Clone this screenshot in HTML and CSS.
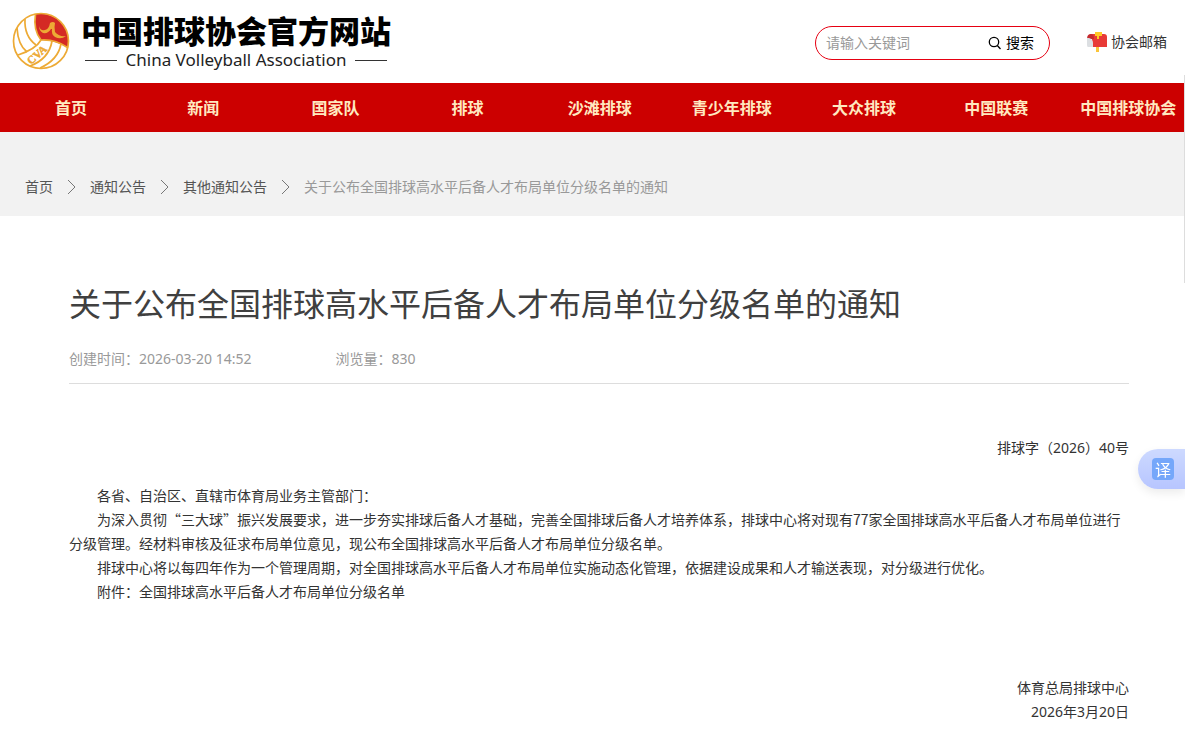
FILE: index.html
```html
<!DOCTYPE html>
<html lang="zh-CN">
<head>
  <meta charset="UTF-8" />
  <meta name="viewport" content="width=device-width, initial-scale=1.0"/>
  <title>关于公布全国排球高水平后备人才布局单位分级名单的通知</title>
  <link rel="stylesheet" href="styles.css">
</head>
<body>

  <header class="header">
    <a class="logo" href="#">
      <svg class="logo-ball" viewBox="0 0 58 58" width="58" height="58" aria-hidden="true">
        <circle cx="29" cy="29" r="27.5" fill="#fff"/>
        <path d="M23.500 2Q33 0 42 5Q56 13 56.500 30Q56 34 55.500 35.500Q43 28 29 28Q21 18 23.500 2Z" fill="#d42a24"/>
        <g fill="none" stroke="#edaa35" stroke-width="1.700">
          <circle cx="29" cy="29" r="27.500"/>
          <path d="M23.500 2Q21 18 29 28Q43 27 55.500 35.500"/>
          <path d="M13 7Q12 24 24 33"/>
          <path d="M5 16Q6 33 15 40"/>
          <path d="M29 28Q24 37 6 43"/>
          <path d="M40 29Q37 47 18 54"/>
          <path d="M49 32Q46 48 28 56"/>
        </g>
        <path d="M27 14Q28 19 33 18Q37 17 38 11Q41 9 43 11Q42 15 43 20Q47 25 54 24Q49 28 43 25Q39 22 40 17L39 17Q36 22 31 21Q27 19 27 14Z" fill="#edaa35"/>
        <text class="logo-mark" x="19" y="53" transform="rotate(-42 19 53)">CVA</text>
      </svg>
      <span class="logo-text">
        <span class="logo-name">中国排球协会官方网站</span>
        <span class="logo-en">China Volleyball Association</span>
      </span>
    </a>

    <form class="search" role="search">
      <input type="text" placeholder="请输入关键词" aria-label="请输入关键词" />
      <button type="button">
        <svg viewBox="0 0 14 14" width="14" height="14" fill="none" stroke="#000" stroke-width="1.300" aria-hidden="true">
          <circle cx="6" cy="6" r="4.700"/>
          <path d="M9.300 9.500L12.500 13"/>
        </svg>
        搜索
      </button>
    </form>

    <a class="mail" href="#">
      <svg viewBox="0 0 22 22" width="22" height="22" aria-hidden="true">
        <rect x="10" y="15" width="3" height="6" fill="#fbc53a"/>
        <path d="M4 3H18Q21 3 21 6V16H6V8Z" fill="#e83a37"/>
        <path d="M1 8Q1 3 5 3Q8 3 8 8Z" fill="#c52a2e"/>
        <path d="M1 7H3Q7 8 7 12V16H2Q1 16 1 14Z" fill="#dcdfe2"/>
        <path d="M9 1H16V5H13V8H11V5H9Z" fill="#ffc928"/>
      </svg>
      协会邮箱
    </a>
  </header>

  <nav class="nav">
    <a href="#">首页</a>
    <a href="#">新闻</a>
    <a href="#">国家队</a>
    <a href="#">排球</a>
    <a href="#">沙滩排球</a>
    <a href="#">青少年排球</a>
    <a href="#">大众排球</a>
    <a href="#">中国联赛</a>
    <a href="#">中国排球协会</a>
  </nav>

  <div class="crumbs">
    <a href="#">首页</a>
    <svg class="arrow" viewBox="0 0 9 14" width="9" height="14"><path d="M1 0L8 7L1 14"/></svg>
    <a href="#">通知公告</a>
    <svg class="arrow" viewBox="0 0 9 14" width="9" height="14"><path d="M1 0L8 7L1 14"/></svg>
    <a href="#">其他通知公告</a>
    <svg class="arrow" viewBox="0 0 9 14" width="9" height="14"><path d="M1 0L8 7L1 14"/></svg>
    <span>关于公布全国排球高水平后备人才布局单位分级名单的通知</span>
  </div>

  <main class="article">
    <h1>关于公布全国排球高水平后备人才布局单位分级名单的通知</h1>
    <div class="meta">
      <span>创建时间：2026-03-20 14:52</span>
      <span>浏览量：830</span>
    </div>

    <div class="content">
      <p class="right">排球字（2026）40号</p>
      <div class="text">
        <p>各省、自治区、直辖市体育局业务主管部门：</p>
        <p>为深入贯彻“三大球”振兴发展要求，进一步夯实排球后备人才基础，完善全国排球后备人才培养体系，排球中心将对现有77家全国排球高水平后备人才布局单位进行分级管理。经材料审核及征求布局单位意见，现公布全国排球高水平后备人才布局单位分级名单。</p>
        <p>排球中心将以每四年作为一个管理周期，对全国排球高水平后备人才布局单位实施动态化管理，依据建设成果和人才输送表现，对分级进行优化。</p>
        <p>附件：全国排球高水平后备人才布局单位分级名单</p>
      </div>
      <p class="right">体育总局排球中心</p>
      <p class="right">2026年3月20日</p>
    </div>
  </main>

  <!-- Floating widgets on the right edge -->
  <div class="side-panel"></div>
  <button class="translate" type="button"><span>译</span></button>

</body>
</html>
```
FILE: styles.css
```css
* {
  margin: 0;
  padding: 0;
  box-sizing: border-box;
}

body {
  background: #fff;
  color: #333;
  font-family: "Noto Sans", "Noto Sans CJK SC", sans-serif;
  font-size: 14px;
  line-height: 24px;
  overflow: hidden;
}

a {
  color: inherit;
  text-decoration: none;
}

/* Header */
.header {
  display: flex;
  align-items: center;
  height: 83px;
  padding: 0 18px 0 12px;
}

.logo {
  display: flex;
  align-items: center;
  gap: 11px;
  margin-right: auto;
  padding-bottom: 1px;
  color: #000;
}

.logo-mark {
  fill: #edaa35;
  font-family: "Liberation Serif", serif;
  font-size: 11px;
  font-weight: bold;
  stroke: #edaa35;
  stroke-width: 0.5px;
}

.logo-text {
  display: flex;
  flex-direction: column;
}

.logo-name {
  font-family: "Noto Sans CJK SC", sans-serif;
  font-size: 31px;
  font-weight: 900;
  line-height: 38px;
}

.logo-en {
  display: flex;
  align-items: center;
  justify-content: center;
  gap: 9px;
  color: #222;
  font-family: "Noto Sans", sans-serif;
  font-size: 17px;
  line-height: 22px;
  white-space: nowrap;
}

.logo-en::before,
.logo-en::after {
  content: "";
  width: 32px;
  height: 1px;
  background: #333;
}

/* Search */
.search {
  display: flex;
  align-items: center;
  width: 235px;
  height: 34px;
  margin: 3px 36px 0 0;
  padding: 0 15px 0 10px;
  border: 1px solid #e60012;
  border-radius: 17px;
}

.search input {
  flex: 1;
  min-width: 0;
  border: none;
  outline: none;
  background: none;
  font: inherit;
}

.search input::placeholder {
  color: #999;
}

.search button {
  display: flex;
  align-items: center;
  gap: 4px;
  border: none;
  background: none;
  color: #000;
  font: inherit;
  cursor: pointer;
}

.mail {
  display: flex;
  align-items: center;
  gap: 3px;
}

/* Navigation */
.nav {
  display: flex;
  height: 49px;
  padding: 1px 0 0 5px;
  background: #c00;
  overflow: hidden;
}

.nav a {
  flex: 0 0 11.2%;
  color: #ffe9c0;
  font-size: 16px;
  font-weight: bold;
  line-height: 49px;
  text-align: center;
  white-space: nowrap;
}

/* Breadcrumbs */
.crumbs {
  display: flex;
  align-items: center;
  gap: 14px;
  height: 84px;
  padding: 26px 25px 0;
  background: #f2f2f2;
  color: #555;
}

.crumbs span {
  color: #999;
}

.arrow {
  fill: none;
  stroke: #777;
}

/* Article */
.article {
  padding: 63px 56px 0 69px;
}

.article h1 {
  color: #404040;
  font-size: 32px;
  font-weight: 400;
  line-height: 50px;
}

.meta {
  display: flex;
  gap: 84px;
  padding: 18px 0 12px;
  border-bottom: 1px solid #ddd;
  color: #999;
}

.content {
  padding-top: 52px;
}

.right {
  text-align: right;
}

.text {
  padding: 23px 0 73px;
  font-family: "Noto Sans CJK SC", sans-serif;
}

.text p {
  text-indent: 2em;
}

/* Floating widgets */
.side-panel {
  position: fixed;
  top: 75px;
  right: 0;
  width: 1px;
  height: 208px;
  background: #ddd;
}

.translate {
  position: fixed;
  top: 449px;
  right: 0;
  width: 47px;
  height: 40px;
  padding-left: 14px;
  border: none;
  border-radius: 20px 0 0 20px;
  background: linear-gradient(#cdd9ff, #b7c5ff);
  box-shadow: 0 4px 10px rgba(0, 0, 0, 0.08);
  cursor: pointer;
}

.translate span {
  display: block;
  width: 22px;
  border-radius: 4px;
  background: #75a7fa;
  color: #fff;
  font: 16px/22px "Noto Sans CJK SC", sans-serif;
  text-align: center;
}
```
